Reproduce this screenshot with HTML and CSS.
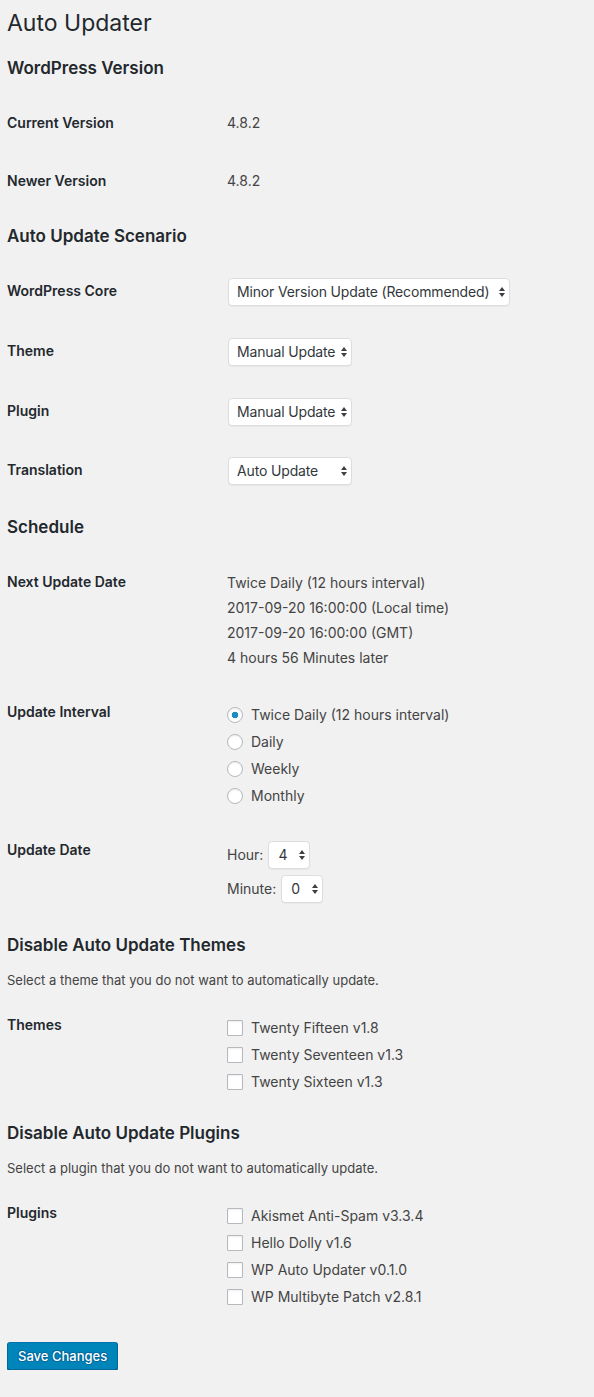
FILE: index.html
```html
<!DOCTYPE html>
<html lang="en">
<head>
<meta charset="utf-8">
<title>Auto Updater</title>
<link rel="stylesheet" href="styles.css">
</head>
<body>
<div class="wrap">
  <h1>Auto Updater</h1>

  <h2>WordPress Version</h2>
  <table class="form-table">
    <tr><th>Current Version</th><td>4.8.2</td></tr>
    <tr><th>Newer Version</th><td>4.8.2</td></tr>
  </table>

  <h2>Auto Update Scenario</h2>
  <table class="form-table">
    <tr><th>WordPress Core</th><td class="td-select">
      <span class="select-wrap"><select class="sel sel-core"><option>Minor Version Update (Recommended)</option></select>
      <svg class="arrows" width="6" height="10" viewBox="0 0 6 10"><polygon points="0,4 3,0 6,4"/><polygon points="0,6 3,10 6,6"/></svg></span>
    </td></tr>
    <tr><th>Theme</th><td class="td-select">
      <span class="select-wrap"><select class="sel sel-std"><option>Manual Update</option><option>Auto Update</option></select>
      <svg class="arrows" width="6" height="10" viewBox="0 0 6 10"><polygon points="0,4 3,0 6,4"/><polygon points="0,6 3,10 6,6"/></svg></span>
    </td></tr>
    <tr><th>Plugin</th><td class="td-select">
      <span class="select-wrap"><select class="sel sel-std"><option>Manual Update</option><option>Auto Update</option></select>
      <svg class="arrows" width="6" height="10" viewBox="0 0 6 10"><polygon points="0,4 3,0 6,4"/><polygon points="0,6 3,10 6,6"/></svg></span>
    </td></tr>
    <tr><th>Translation</th><td class="td-select">
      <span class="select-wrap"><select class="sel sel-std"><option>Auto Update</option><option>Manual Update</option></select>
      <svg class="arrows" width="6" height="10" viewBox="0 0 6 10"><polygon points="0,4 3,0 6,4"/><polygon points="0,6 3,10 6,6"/></svg></span>
    </td></tr>
  </table>

  <h2>Schedule</h2>
  <table class="form-table">
    <tr><th>Next Update Date</th><td class="td-lines">
      <div>Twice Daily (12 hours interval)</div>
      <div>2017-09-20 16:00:00 (Local time)</div>
      <div>2017-09-20 16:00:00 (GMT)</div>
      <div>4 hours 56 Minutes later</div>
    </td></tr>
    <tr><th>Update Interval</th><td class="td-list">
      <label class="opt"><input type="radio" name="interval" class="radio" checked> Twice Daily (12 hours interval)</label>
      <label class="opt"><input type="radio" name="interval" class="radio"> Daily</label>
      <label class="opt"><input type="radio" name="interval" class="radio"> Weekly</label>
      <label class="opt"><input type="radio" name="interval" class="radio"> Monthly</label>
    </td></tr>
    <tr><th>Update Date</th><td class="td-date">
      <div class="date-line"><span>Hour:</span>
        <span class="select-wrap"><select class="sel sel-hour"><option>4</option></select>
        <svg class="arrows" width="6" height="10" viewBox="0 0 6 10"><polygon points="0,4 3,0 6,4"/><polygon points="0,6 3,10 6,6"/></svg></span>
      </div>
      <div class="date-line"><span>Minute:</span>
        <span class="select-wrap"><select class="sel sel-hour"><option>0</option></select>
        <svg class="arrows" width="6" height="10" viewBox="0 0 6 10"><polygon points="0,4 3,0 6,4"/><polygon points="0,6 3,10 6,6"/></svg></span>
      </div>
    </td></tr>
  </table>

  <h2>Disable Auto Update Themes</h2>
  <p class="desc">Select a theme that you do not want to automatically update.</p>
  <table class="form-table after-desc">
    <tr><th>Themes</th><td class="td-list">
      <label class="opt"><input type="checkbox" class="check"> Twenty Fifteen v1.8</label>
      <label class="opt"><input type="checkbox" class="check"> Twenty Seventeen v1.3</label>
      <label class="opt"><input type="checkbox" class="check"> Twenty Sixteen v1.3</label>
    </td></tr>
  </table>

  <h2>Disable Auto Update Plugins</h2>
  <p class="desc">Select a plugin that you do not want to automatically update.</p>
  <table class="form-table after-desc">
    <tr><th>Plugins</th><td class="td-list">
      <label class="opt"><input type="checkbox" class="check"> Akismet Anti-Spam v3.3.4</label>
      <label class="opt"><input type="checkbox" class="check"> Hello Dolly v1.6</label>
      <label class="opt"><input type="checkbox" class="check"> WP Auto Updater v0.1.0</label>
      <label class="opt"><input type="checkbox" class="check"> WP Multibyte Patch v2.8.1</label>
    </td></tr>
  </table>

  <p class="submit"><button type="button" class="button-primary">Save Changes</button></p>
</div>
</body>
</html>
```

FILE: styles.css
```css
html, body {
  margin: 0;
  padding: 0;
  background: #f1f1f1;
}

body {
  font-family: Inter, "Liberation Sans", sans-serif;
  font-size: 13px;
  color: #444;
}

.wrap {
  padding: 0 7px;
}

h1 {
  margin: 0;
  padding: 9px 0 4px;
  font-size: 23px;
  font-weight: 400;
  line-height: 29px;
  color: #23282d;
}

h2 {
  margin: 16px 0 0;
  font-size: 17px;
  font-weight: 600;
  line-height: 20px;
  color: #23282d;
}

.form-table {
  margin: 16px 0 0;
  border-collapse: collapse;
  width: 100%;
}

.form-table.after-desc {
  margin-top: 6px;
}

.form-table th {
  width: 210px;
  padding: 20px 10px 20px 0;
  text-align: left;
  vertical-align: top;
  font-size: 14px;
  font-weight: 600;
  line-height: 18px;
  color: #23282d;
}

.form-table td {
  padding: 20px 0;
  vertical-align: top;
  font-size: 14px;
  line-height: 18px;
  color: #444;
}

.form-table td.td-select {
  padding: 15px 0 14.75px;
}

.form-table td.td-lines {
  padding: 17px 0 13px;
  line-height: 25px;
}

.form-table td.td-list {
  padding: 18px 0 12px;
}

.form-table td.td-date {
  padding: 17px 0 13px;
}

.select-wrap {
  position: relative;
  display: inline-flex;
  margin: 1px;
  vertical-align: top;
}

.sel {
  -webkit-appearance: none;
  appearance: none;
  height: 28px;
  margin: 0;
  padding: 0 12px 0 8px;
  border: 1px solid #ddd;
  border-radius: 4px;
  background: #fff;
  box-shadow: 0 1px 1px rgba(0, 0, 0, 0.04);
  font-family: Inter, "Liberation Sans", sans-serif;
  font-size: 14px;
  letter-spacing: -0.15px;
  line-height: 26px;
  color: #32373c;
  outline: none;
}

.sel-core { width: 282px; }
.sel-std { width: 124px; }
.sel-hour { width: 42px; padding-left: 9px; }

.arrows {
  position: absolute;
  right: 5px;
  top: 50%;
  transform: translateY(-50%);
  fill: #3c3f43;
  pointer-events: none;
}

.opt {
  display: flex;
  align-items: center;
  gap: 8px;
  height: 27px;
  white-space: nowrap;
}

.radio,
.check {
  -webkit-appearance: none;
  appearance: none;
  flex: none;
  width: 16px;
  height: 16px;
  margin: 0;
  border: 1px solid #b4b9be;
  background: #fff;
  box-shadow: inset 0 1px 2px rgba(0, 0, 0, 0.07);
}

.radio {
  border-radius: 50%;
}

.radio:checked {
  background: radial-gradient(circle at center, #1e8cbe 0, #1e8cbe 3px, #fff 3.6px);
}

.check {
  border-radius: 1px;
}

.date-line {
  display: flex;
  align-items: center;
  gap: 4px;
  height: 34px;
}

.desc {
  margin: 15px 0 0;
  font-size: 13px;
  line-height: 20px;
  color: #444;
}

.submit {
  margin: 20px 0 0;
  padding: 0;
}

.button-primary {
  height: 28px;
  margin: 0;
  padding: 0 10px 1px;
  border: 1px solid;
  border-color: #0073aa #006799 #006799;
  border-radius: 3px;
  background: #0085ba;
  box-shadow: 0 1px 0 #006799;
  color: #fff;
  font-family: Inter, "Liberation Sans", sans-serif;
  font-size: 13px;
  font-weight: 500;
  line-height: 26px;
  text-shadow: 0 -1px 1px #006799, 1px 0 1px #006799, 0 1px 1px #006799, -1px 0 1px #006799;
  cursor: pointer;
}
```
